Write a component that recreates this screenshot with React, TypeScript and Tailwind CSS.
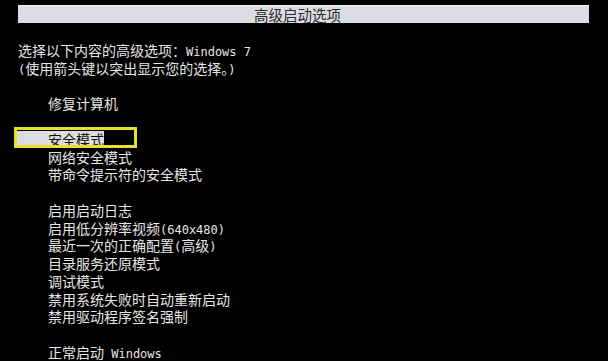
const cjk = '"Noto Sans CJK SC", "Noto Sans", sans-serif';

// ASCII runs use a narrow console-like mono face; CJK runs use Noto CJK
function Txt({ text }: { text: string }) {
  const parts = text.split(/([\x00-\x7f]+)/).filter((p) => p.length > 0);
  return (
    <>
      {parts.map((p, i) =>
        /^[\x00-\x7f]+$/.test(p) ? (
          <span key={i} className="whitespace-pre font-['DejaVu_Sans_Mono',monospace] text-[12px]">
            {p}
          </span>
        ) : (
          <span key={i}>{p}</span>
        ),
      )}
    </>
  );
}

type Line = { text: string; indent?: boolean; selected?: boolean };

const lines: Line[] = [
  { text: "选择以下内容的高级选项：Windows 7" },
  { text: "(使用箭头键以突出显示您的选择。)" },
  { text: "" },
  { text: "修复计算机", indent: true },
  { text: "" },
  { text: "安全模式", indent: true, selected: true },
  { text: "网络安全模式", indent: true },
  { text: "带命令提示符的安全模式", indent: true },
  { text: "" },
  { text: "启用启动日志", indent: true },
  { text: "启用低分辨率视频(640x480)", indent: true },
  { text: "最近一次的正确配置(高级)", indent: true },
  { text: "目录服务还原模式", indent: true },
  { text: "调试模式", indent: true },
  { text: "禁用系统失败时自动重新启动", indent: true },
  { text: "禁用驱动程序签名强制", indent: true },
  { text: "" },
  { text: "正常启动 Windows", indent: true },
];

export default function App() {
  return (
    <div
      className="h-[361px] w-[608px] overflow-hidden bg-black text-[14px] text-[#e6e6e6]"
      style={{ fontFamily: cjk }}
    >
      <div className="ml-[18px] mt-[5px] h-[18px] w-[571px] border-t border-[#f4f4f6] bg-[#dcdde0] pr-[12px] text-center text-[14.5px] leading-[17px] text-[#2b2b2b]">
        高级启动选项
      </div>

      <div className="mt-[19px]">
        {lines.map((l, i) =>
          l.selected ? (
            <div key={i} className="relative flex h-[17.75px] items-center">
              <div className="ml-[16px] flex h-[17px] w-[88px] items-center bg-[#dcdde0] pl-[32px] leading-[17px] text-[#111]">
                <Txt text={l.text} />
              </div>
              <div className="absolute left-[14px] top-[-4px] h-[21px] w-[123px] border-[3px] border-solid border-[#e8e12c]" />
            </div>
          ) : (
            <div
              key={i}
              className={`h-[17.75px] whitespace-nowrap leading-[17.75px] ${l.indent ? "pl-[48px]" : "pl-[18px]"}`}
            >
              <Txt text={l.text} />
            </div>
          ),
        )}
      </div>
    </div>
  );
}
